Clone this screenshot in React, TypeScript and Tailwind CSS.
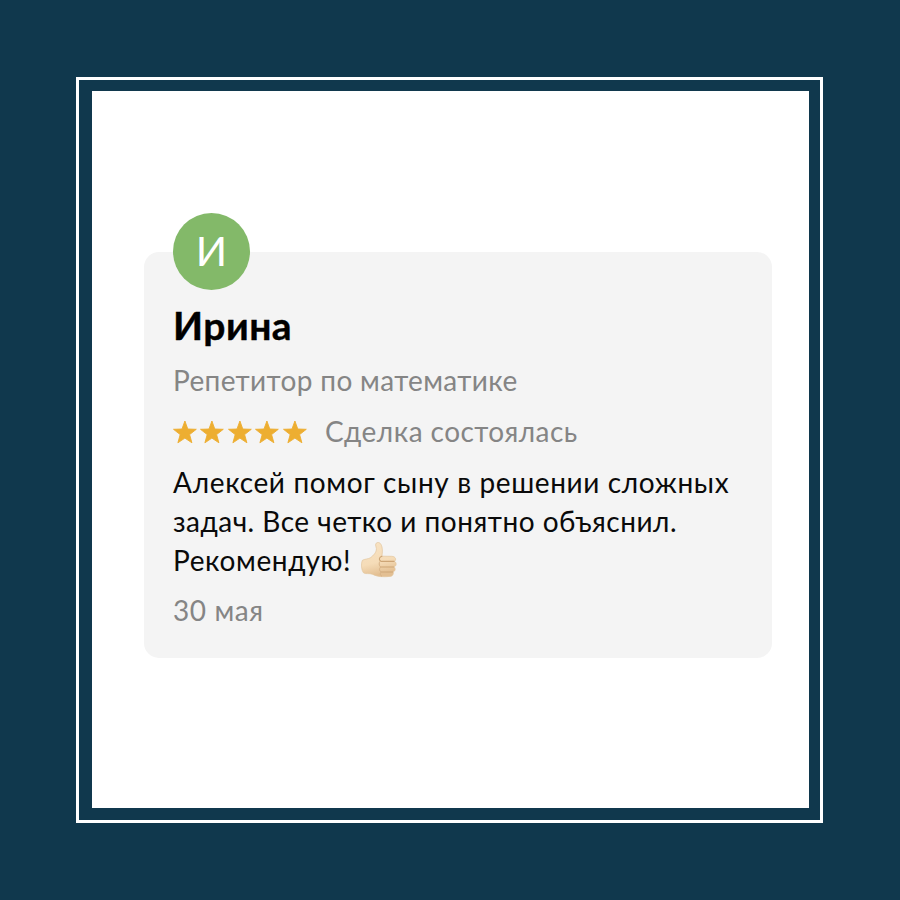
const STARS = [0, 1, 2, 3, 4];

function Star() {
  return (
    <svg className="h-[25px] w-[27.4px] shrink-0" viewBox="0 0 27.4 25">
      <path
        d="M11.9 1 L14.8 9 L23.3 9.3 L16.6 14.6 L18.9 22.8 L11.9 18.1 L4.9 22.8 L7.2 14.6 L.5 9.3 L9 9 Z"
        fill="#edae31"
        stroke="#edae31"
        strokeWidth=".9"
        strokeLinejoin="round"
      />
    </svg>
  );
}

function ThumbsUp() {
  return (
    <svg className="ml-[10px] mb-px h-[36px] w-[36px] shrink-0" viewBox="0 0 36 36">
      <defs>
        <linearGradient id="skin" x1="0" y1="0" x2="0.25" y2="1">
          <stop offset="0" stopColor="#f8e3c4" />
          <stop offset="0.65" stopColor="#f5dcb8" />
          <stop offset="1" stopColor="#e3bf92" />
        </linearGradient>
      </defs>
      <path
        d="M1.5 18.2 C4.5 16.8 7.5 17 9.3 15.8 C12.5 13.6 15.5 10.2 15.4 6.7 L14.6 3 C14.6 -.2 18.6 -.3 20 2.4 C21.8 5.5 21.6 10.2 20.9 14.2 L30.7 14.3 C34.9 14.4 35.6 18 33.5 19.3 C35.9 20.8 35.6 24 33.1 24.9 C34.9 26.4 34.4 29.2 32 29.9 C33 31.5 31.8 34.3 29 34.4 C22.3 35.2 16.2 34.8 11.2 32.2 C8.4 31.1 5 32.2 2.7 31 C.4 28.5 -.3 21.8 1.5 18.2 Z"
        fill="url(#skin)"
        stroke="#e2c59d"
        strokeWidth=".7"
      />
      <path
        d="M20.9 14.2 C18.2 15.2 17.5 17.4 19.5 19 M20.3 19.4 H33 M19.6 25 H32.7 M20.1 30 H31.7"
        fill="none"
        stroke="#cda576"
        strokeWidth="1.1"
        strokeLinecap="round"
      />
      <path
        d="M19.5 19 C17.6 20.5 17.8 23.5 19.6 25 C18 26.6 18.3 29 20.1 30 C18.8 31.5 19.1 33.5 21 34.3"
        fill="none"
        stroke="#d8b387"
        strokeWidth="1"
      />
    </svg>
  );
}

export default function App() {
  return (
    <main className="flex h-[900px] w-[900px] bg-[#10384d] pl-[76px] pt-[77px] font-['Lato','Noto_Sans',sans-serif]">
      <div className="h-[746px] w-[747px] border-3 border-white p-[13px] pt-[11px]">
        <div className="h-[717px] w-[717px] bg-white pl-[51.5px] pt-[160.5px]">
          <article className="flex h-[406.5px] w-[628.5px] flex-col rounded-[15px] bg-[#f4f4f4] pl-[29.5px]">
            <div className="-mt-[38.5px] flex h-[77px] w-[77px] shrink-0 items-center justify-center rounded-full bg-[#83b969] pb-[2px] text-[41px] text-white">
              И
            </div>
            <h1 className="mt-[11px] h-[48px] text-[39px] font-bold leading-[48px] tracking-[0.5px] text-black [-webkit-text-stroke:0.4px_black]">
              <span>Ирина</span>
            </h1>
            <p className="mt-[12px] h-[39px] text-[28px] leading-[39px] tracking-[0.35px] text-[#858585]">
              <span>Репетитор по математике</span>
            </p>
            <div className="mt-[12px] flex h-[39px] items-center text-[28px] leading-[39px] tracking-[0.45px] text-[#858585]">
              <div className="mt-[2px] flex">
                {STARS.map((i) => (
                  <Star key={i} />
                ))}
              </div>
              <span className="ml-[15px]">Сделка состоялась</span>
            </div>
            <div className="mt-[12px] text-[28px] leading-[39px] text-[#0a0a0a]">
              <p className="tracking-[0.62px]"><span>Алексей помог сыну в решении сложных</span></p>
              <p className="tracking-[0.49px]"><span>задач. Все четко и понятно объяснил.</span></p>
              <div className="flex h-[39px] items-center tracking-[0.6px]">
                <span>Рекомендую!</span>
                <ThumbsUp />
              </div>
            </div>
            <p className="mt-[11px] h-[39px] text-[28px] leading-[39px] tracking-[0.6px] text-[#858585]">
              <span>30 мая</span>
            </p>
          </article>
        </div>
      </div>
    </main>
  );
}
